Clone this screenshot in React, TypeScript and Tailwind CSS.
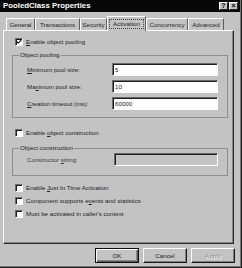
import React from "react";

const Check = ({ checked }: { checked?: boolean }) => (
  <span className="relative w-[8px] h-[8px] shrink-0 bg-white border border-t-[#6a6a6a] border-l-[#6a6a6a] border-b-white border-r-white shadow-[inset_1px_1px_0_#1e1e1e]">
    {checked && (
      <svg viewBox="0 0 8 8" className="absolute left-[0px] top-[0px] w-[6px] h-[6px]">
        <path d="M1 3.5 L3 5.5 L7 1.5" stroke="#000" strokeWidth="1.4" fill="none" />
      </svg>
    )}
  </span>
);

const Row = ({ checked, children, className = "" }: { checked?: boolean; children: React.ReactNode; className?: string }) => (
  <div className={`flex items-center gap-[3px] h-[10px] ml-[11px] ${className}`}>
    <Check checked={checked} />
    <span className="leading-[10px]">{children}</span>
  </div>
);

const Input = ({ value, disabled, w = "w-[106px]" }: { value?: string; disabled?: boolean; w?: string }) => (
  <div
    className={`${w} h-[13px] flex items-center px-[2px] border border-t-[#6a6a6a] border-l-[#6a6a6a] border-b-white border-r-white shadow-[inset_1px_1px_0_#1e1e1e] ${
      disabled ? "bg-[#c3c3c3]" : "bg-white"
    }`}
  >
    {value}
  </div>
);

const U = ({ children }: { children: React.ReactNode }) => (
  <span className="underline underline-offset-[1px] decoration-[0.7px]">{children}</span>
);

const Tab = ({ label, w }: { label: string; w: string }) => (
  <div className={`${w} h-[12px] flex items-center justify-center border-t border-l border-t-white border-l-white border-r border-r-[#5c5c5c] leading-[10px]`}>
    {label}
  </div>
);

const Btn = ({ children, def, disabled }: { children: React.ReactNode; def?: boolean; disabled?: boolean }) => (
  <div
    className={`w-[44px] h-[15px] flex items-center justify-center border ${
      def
        ? "border-[#111] shadow-[inset_1px_1px_0_#fff,inset_-1px_-1px_0_#555,inset_-2px_-2px_0_#888]"
        : "border-t-white border-l-white border-b-[#1a1a1a] border-r-[#1a1a1a] shadow-[inset_-1px_-1px_0_#808080]"
    } ${disabled ? "text-[#8c8c8c] [text-shadow:1px_1px_0_#fff]" : ""}`}
  >
    {children}
  </div>
);

export default function App() {
  return (
    <div className="w-[242px] h-[268px] bg-[#c3c3c3] border-r border-b border-r-[#1a1a1a] border-b-[#1a1a1a] shadow-[inset_-1px_-1px_0_#7a7a7a] font-['Liberation_Sans',Arial,sans-serif] text-[6.2px] text-[#222] flex flex-col">
      {/* title bar */}
      <div className="h-[12px] w-[240px] bg-[#080808] flex items-center justify-between pl-[3px] pr-[2px]">
        <span className="text-white font-bold text-[7.8px] leading-[10px]">PooledClass Properties</span>
        <div className="flex gap-[1px]">
          <div className="w-[9px] h-[8px] bg-[#c3c3c3] border border-t-white border-l-white border-b-[#222] border-r-[#222] flex items-center justify-center text-[7px] font-bold leading-[6px] text-black">?</div>
          <div className="w-[9px] h-[8px] bg-[#c3c3c3] border border-t-white border-l-white border-b-[#222] border-r-[#222] flex items-center justify-center text-[7px] font-bold leading-[6px] text-black">×</div>
        </div>
      </div>

      {/* tabs */}
      <div className="mt-[4px] h-[14px] flex items-end pl-[6px] relative z-10">
        <Tab label="General" w="w-[29px]" />
        <Tab label="Transactions" w="w-[45px]" />
        <Tab label="Security" w="w-[27px]" />
        <div className="w-[39px] h-[15px] -mb-[1px] bg-[#c3c3c3] border-t border-l border-r border-t-white border-l-white border-r-[#5c5c5c] flex items-start justify-center pt-[2px]">
          <div className="w-[35px] h-[10px] border border-dotted border-[#444] flex items-center justify-center leading-[8px]">Activation</div>
        </div>
        <Tab label="Concurrency" w="w-[42px]" />
        <Tab label="Advanced" w="w-[36px]" />
      </div>

      {/* panel */}
      <div className="ml-[3px] w-[231px] h-[214px] border border-t-white border-l-white border-r-[#2a2a2a] border-b-[#2a2a2a] shadow-[inset_-1px_-1px_0_#858585] flex flex-col">
        <Row checked className="mt-[6px]">
          <U>E</U>nable object pooling
        </Row>

        <fieldset className="mt-[4px] ml-[8px] mr-[5px] border border-[#8e8e8e] pt-[4px] pb-[7px] pl-[14px] pr-[9px] flex flex-col gap-[4px]">
          <legend className="-ml-[8px] px-[1px] leading-[8px]">Object pooling</legend>
          <div className="flex items-center justify-between">
            <span><U>M</U>inimum pool size:</span>
            <Input value="5" />
          </div>
          <div className="flex items-center justify-between">
            <span>Ma<U>x</U>imum pool size:</span>
            <Input value="10" />
          </div>
          <div className="flex items-center justify-between">
            <span><U>C</U>reation timeout (ms):</span>
            <Input value="60000" />
          </div>
        </fieldset>

        <Row className="mt-[10px]">
          Enable <U>o</U>bject construction
        </Row>

        <fieldset className="mt-[6px] ml-[8px] mr-[5px] border border-[#8e8e8e] pt-[1px] pb-[9px] pl-[14px] pr-[9px] flex flex-col">
          <legend className="-ml-[8px] px-[1px] leading-[8px]">Object construction</legend>
          <div className="flex items-center justify-between">
            <span className="text-[#3a3a3a]">Constructor <U>s</U>tring:</span>
            <Input disabled w="w-[104px]" />
          </div>
        </fieldset>

        <div className="mt-[7px] flex flex-col gap-[3px]">
          <Row>
            Enable <U>J</U>ust In Time Activation
          </Row>
          <Row>
            Component supports e<U>v</U>ents and statistics
          </Row>
          <Row>Must be activated in caller's context</Row>
        </div>
      </div>

      {/* buttons */}
      <div className="mt-[4px] flex justify-end gap-[4px] pr-[6px]">
        <Btn def>OK</Btn>
        <Btn>Cancel</Btn>
        <Btn disabled>Apply</Btn>
      </div>
    </div>
  );
}
